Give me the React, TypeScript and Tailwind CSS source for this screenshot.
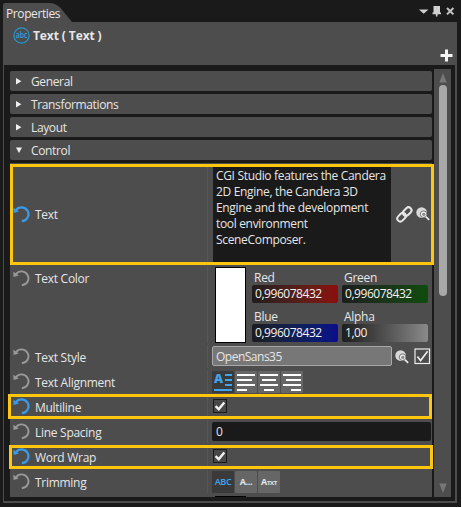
import type { ReactNode } from "react";
import clsx from "clsx";

const SECTIONS = [
  { name: "General", open: false },
  { name: "Transformations", open: false },
  { name: "Layout", open: false },
  { name: "Control", open: true },
];

type Channel = { label: string; value: string; fill: string };

const CHANNELS: Channel[] = [
  { label: "Red", value: "0,996078432", fill: "from-[#1e1c1c] to-[#8c0c0c]" },
  { label: "Green", value: "0,996078432", fill: "from-[#1c1e1c] to-[#0c4c0c]" },
  { label: "Blue", value: "0,996078432", fill: "from-[#1c1c20] to-[#0c0c8c]" },
  { label: "Alpha", value: "1,00", fill: "from-[#1e1e1e] to-[#8a8a8a]" },
];

// ---- Icons ----------------------------------------------------------------

function ResetIcon({ active }: { active?: boolean }) {
  return (
    <svg
      width="17"
      height="17"
      viewBox="0 0 17 17"
      fill="none"
      className={clsx("shrink-0", active ? "text-[#3a9ae8]" : "text-[#999999]")}
    >
      <path d="M3 4.2A6.9 6.9 0 1 1 8.8 15.2" stroke="currentColor" strokeWidth={active ? 2.3 : 1.9} />
      <path d="M0.3 1.8L0.6 6.9L5.8 5.6Z" fill="currentColor" />
    </svg>
  );
}

function LinkIcon() {
  return (
    <svg width="17" height="17" viewBox="0 0 17 17" fill="none" stroke="#e6e6e6" strokeWidth="2">
      <rect x="-4.8" y="-3" width="9.6" height="6" rx="3" transform="translate(11.2 5.6) rotate(-45)" />
      <rect x="-4.8" y="-3" width="9.6" height="6" rx="3" transform="translate(5.6 11.2) rotate(-45)" />
    </svg>
  );
}

function BrowseIcon() {
  return (
    <svg width="14" height="14" viewBox="0 0 14 14" fill="none">
      <circle cx="5.6" cy="5.6" r="5.3" fill="#d8d8d8" />
      <circle cx="7.6" cy="7.2" r="3.3" fill="#ececec" stroke="#6a6a6a" strokeWidth="0.9" />
      <circle cx="7.8" cy="7.3" r="1.6" fill="#8a8a8a" />
      <path d="M9.8 9.6L13.2 12.9" stroke="#e8e8e8" strokeWidth="1.7" />
    </svg>
  );
}

function AbcBadge() {
  return (
    <svg width="17" height="17" viewBox="0 0 17 17">
      <circle cx="8.5" cy="8.5" r="7.6" fill="none" stroke="#2596cc" strokeWidth="1.2" />
      <text
        x="2.7"
        y="11.2"
        textLength="11.6"
        lengthAdjust="spacingAndGlyphs"
        letterSpacing="0"
        fontFamily="Open Sans, sans-serif"
        fontSize="8"
        fontWeight="600"
        fill="#2aa2dc"
      >
        abc
      </text>
    </svg>
  );
}

function AlignIcon({ widths, align }: { widths: number[]; align: "left" | "center" | "right" }) {
  return (
    <svg width="22" height="22" viewBox="0 0 22 22" fill="#ffffff" shapeRendering="crispEdges">
      {widths.map((w, i) => {
        const x = align === "left" ? 2 : align === "right" ? 20 - w : 11 - w / 2;
        return <rect key={i} x={x} y={3 + i * 5} width={w} height="2" />;
      })}
    </svg>
  );
}

function AutoAlignIcon() {
  return (
    <svg width="22" height="22" viewBox="0 0 22 22" fill="#41a5ee">
      <text x="2" y="12" fontFamily="Open Sans, sans-serif" fontSize="12.5" fontWeight="800">
        A
      </text>
      <path d="M13 3h7v2h-7zM13 8h7v2h-7zM13 13h7v2h-7zM2 18h18v2h-18z" />
    </svg>
  );
}

// ---- Controls -------------------------------------------------------------

function Checkbox() {
  return (
    <span className="mb-px ml-[4px] flex size-[14px] items-center justify-center border border-[#1a1a1a] bg-[#484848]">
      <svg width="12" height="12" viewBox="0 0 12 12" fill="none" stroke="#f2f2f2" strokeWidth="2.4">
        <path d="M1.6 6.2L4.7 9.3L10.3 2.4" />
      </svg>
    </span>
  );
}

function ToolButton({ on, children }: { on?: boolean; children: ReactNode }) {
  return (
    <span
      className={clsx(
        "flex size-[22px] items-center justify-center overflow-hidden rounded-[1px]",
        on ? "bg-[#3a3a3a]" : "bg-[#666666]",
      )}
    >
      {children}
    </span>
  );
}

function ChannelField({ label, value, fill }: Channel) {
  return (
    <div className="flex w-[86px] flex-col">
      <span className="h-[18px] pl-[2px] leading-[21px]">{label}</span>
      <span
        className={clsx(
          "h-[18px] rounded-[2px] bg-linear-to-r pl-[3px] leading-[18px] tracking-[-0.45px] text-[#f2f2f2]",
          fill,
        )}
      >
        {value}
      </span>
    </div>
  );
}

type RowProps = {
  label: string;
  height: string;
  active?: boolean;
  top?: boolean;
  highlight?: string;
  children: ReactNode;
};

function Row({ label, height, active, top, highlight, children }: RowProps) {
  return (
    <div className={clsx("relative flex shrink-0 bg-[#4d4d4d]", height)}>
      <div className={clsx("flex w-[197px] gap-[5px] pl-[3px]", top ? "items-start pt-[5px]" : "items-center")}>
        <ResetIcon active={active} />
        <span className={clsx("leading-[18px]", !top && "pt-[2px]")}>{label}</span>
      </div>
      <div className="my-px w-px bg-[#575757]" />
      <div className="flex flex-1 items-center pl-px">{children}</div>
      {highlight && <div className={clsx("absolute z-10 border-3 border-[#ffc610]", highlight)} />}
    </div>
  );
}

function Section({ name, open }: { name: string; open: boolean }) {
  return (
    <div className="flex h-5 w-[422px] shrink-0 items-center rounded-[2px] bg-[#4d4d4d] pl-[6px]">
      <svg width="6" height="8" viewBox="0 0 6 8" fill="#f0f0f0">
        <path d={open ? "M0 1.5H6L3 7Z" : "M0 1L5.4 4.2L0 7.6Z"} />
      </svg>
      <span className="pt-[2px] pl-[9px] tracking-[-0.36px]">{name}</span>
    </div>
  );
}

function ScrollBar() {
  return (
    <div className="mt-1 flex h-[428px] w-[17px] flex-col items-center bg-[#4d4d4d] pt-1">
      <svg width="8" height="10" viewBox="0 0 8 10" fill="#777777">
        <path d="M4 0L7.7 9.4H0.3Z" />
      </svg>
      <div className="mt-[2px] h-[211px] w-2 rounded-full bg-[#a8a8a8]" />
      <svg className="mt-auto mb-1" width="8" height="10" viewBox="0 0 8 10" fill="#777777">
        <path d="M0.3 0.4H7.7L4 10Z" />
      </svg>
    </div>
  );
}

// ---- Window ---------------------------------------------------------------

function TitleBar() {
  return (
    <div className="flex h-[22px] shrink-0 items-end justify-between pl-[3px]">
      <div className="relative h-[19px] w-[70px]">
        <svg className="absolute inset-0" width="70" height="19" viewBox="0 0 70 19" fill="#4d4d4d">
          <path d="M0 19V2Q0 0 2 0H47Q54 0 60 8L69 19Z" />
        </svg>
        <span className="relative pl-[3px] leading-[22px] tracking-[-0.4px]">Properties</span>
      </div>
      <svg className="mr-[6px]" width="37" height="18" viewBox="0 0 37 18" fill="#d0d0d0">
        <path d="M1 5.6H10.4L5.7 9.8Z" />
        <path d="M15.5 2h6.5v6.5h1v1.8h-3.5v2.2h-1.6v-2.2h-3.4v-1.8h1z" />
        <path d="M29 4L35.4 10.4M35.4 4L29 10.4" stroke="#c4c4c4" strokeWidth="2" />
      </svg>
    </div>
  );
}

export default function App() {
  return (
    <div className="h-[508px] w-[462px] overflow-hidden bg-white">
      <div className="flex h-[507px] w-[461px] flex-col bg-[#1a1a1a] font-['Open_Sans',sans-serif] text-[12px] leading-[18px] tracking-[-0.28px] text-[#e6e6e6]">
        <TitleBar />
        <div className="ml-[3px] flex h-[481px] w-[454px] flex-col bg-[#4d4d4d] pr-[2px] pl-px">
          <header className="flex h-[43px] items-start justify-between pl-[9px]">
            <div className="flex items-start gap-[3px] pt-[5px]">
              <AbcBadge />
              <span className="tracking-[-0.1px] font-bold">Text ( Text )</span>
            </div>
            <svg className="mt-[27px] mr-[2px]" width="13" height="13" viewBox="0 0 13 13" fill="#f4f4f4">
              <path d="M5 0.5h3v4.5h4.5v3H8v4.5H5V8H0.5V5H5z" />
            </svg>
          </header>

          <main className="flex h-[436px] bg-[#1a1a1a] pl-[6px]">
            <div className="flex h-[432px] w-[424px] flex-col pt-[6px]">
              <div className="flex flex-col gap-[3px]">
                {SECTIONS.map((s) => (
                  <Section key={s.name} {...s} />
                ))}
              </div>

              <div className="mt-[3px] flex h-[334px] w-[422px] shrink-0 flex-col [clip-path:inset(0_-2px_0_-2px)]">
                <Row label="Text" height="h-[102px]" active highlight="top-px left-0 h-[101px] w-[424px]">
                  <div className="ml-[4px] h-[95px] w-[178px] bg-[#1a1a1a] pt-px pl-[3px] leading-[16px] tracking-[-0.33px]">
                    CGI Studio features the Candera
                    <br />
                    2D Engine, the Candera 3D
                    <br />
                    Engine and the development
                    <br />
                    tool environment
                    <br />
                    SceneComposer.
                  </div>
                  <div className="ml-[5px] flex items-center gap-[3px]">
                    <LinkIcon />
                    <BrowseIcon />
                  </div>
                </Row>

                <Row label="Text Color" height="h-[79px]" top>
                  <div className="ml-[6px] h-[76px] w-[31px] border border-black bg-white" />
                  <div className="ml-[6px] grid h-[76px] grid-cols-2 gap-x-1 gap-y-[2px]">
                    {CHANNELS.map((c) => (
                      <ChannelField key={c.label} {...c} />
                    ))}
                  </div>
                </Row>

                <Row label="Text Style" height="h-[25px]">
                  <div className="mb-px ml-[3px] h-5 w-[180px] rounded-[2px] border border-[#a8a8a8] bg-[#777777] pl-[3px] leading-[20px] tracking-[-0.5px]">
                    OpenSans35
                  </div>
                  <div className="ml-[3px]">
                    <BrowseIcon />
                  </div>
                  <svg className="ml-[5px]" width="17" height="17" viewBox="0 0 17 17" fill="none" stroke="#ededed">
                    <rect x="1" y="1" width="14.5" height="14.5" strokeWidth="1.2" />
                    <path d="M3.4 8.4L6.6 12.6L13.6 3.2" strokeWidth="1.6" />
                  </svg>
                </Row>

                <Row label="Text Alignment" height="h-[25px]">
                  <div className="mt-px ml-[3px] flex gap-px">
                    <ToolButton on>
                      <AutoAlignIcon />
                    </ToolButton>
                    <ToolButton>
                      <AlignIcon widths={[18, 15, 18, 10]} align="left" />
                    </ToolButton>
                    <ToolButton>
                      <AlignIcon widths={[18, 14, 18, 10]} align="center" />
                    </ToolButton>
                    <ToolButton>
                      <AlignIcon widths={[18, 15, 18, 10]} align="right" />
                    </ToolButton>
                  </div>
                </Row>

                <Row label="Multiline" height="h-[25px]" active highlight="top-0 -left-[2px] h-[25px] w-[424px]">
                  <Checkbox />
                </Row>

                <Row label="Line Spacing" height="h-[25px]">
                  <div className="ml-[3px] h-[19px] w-[219px] rounded-[2px] bg-[#1a1a1a] pl-[4px] leading-[19px]">
                    0
                  </div>
                </Row>

                <Row label="Word Wrap" height="h-[25px]" active highlight="top-px -left-px h-[24px] w-[424px]">
                  <Checkbox />
                </Row>

                <Row label="Trimming" height="h-[25px]">
                  <div className="mt-px ml-[3px] flex gap-px text-[9px] font-bold tracking-[-0.3px]">
                    <ToolButton on>
                      <span className="font-semibold text-[#41a5ee]">ABC</span>
                    </ToolButton>
                    <ToolButton>A...</ToolButton>
                    <ToolButton>
                      <span>
                        A<span className="text-[6px]">TXT</span>
                      </span>
                    </ToolButton>
                  </div>
                </Row>

                <div className="flex h-[3px] items-end bg-[#4d4d4d] pl-[205px]">
                  <div className="h-px w-[31px] bg-black" />
                </div>
              </div>
            </div>
            <ScrollBar />
          </main>
        </div>
      </div>
    </div>
  );
}
